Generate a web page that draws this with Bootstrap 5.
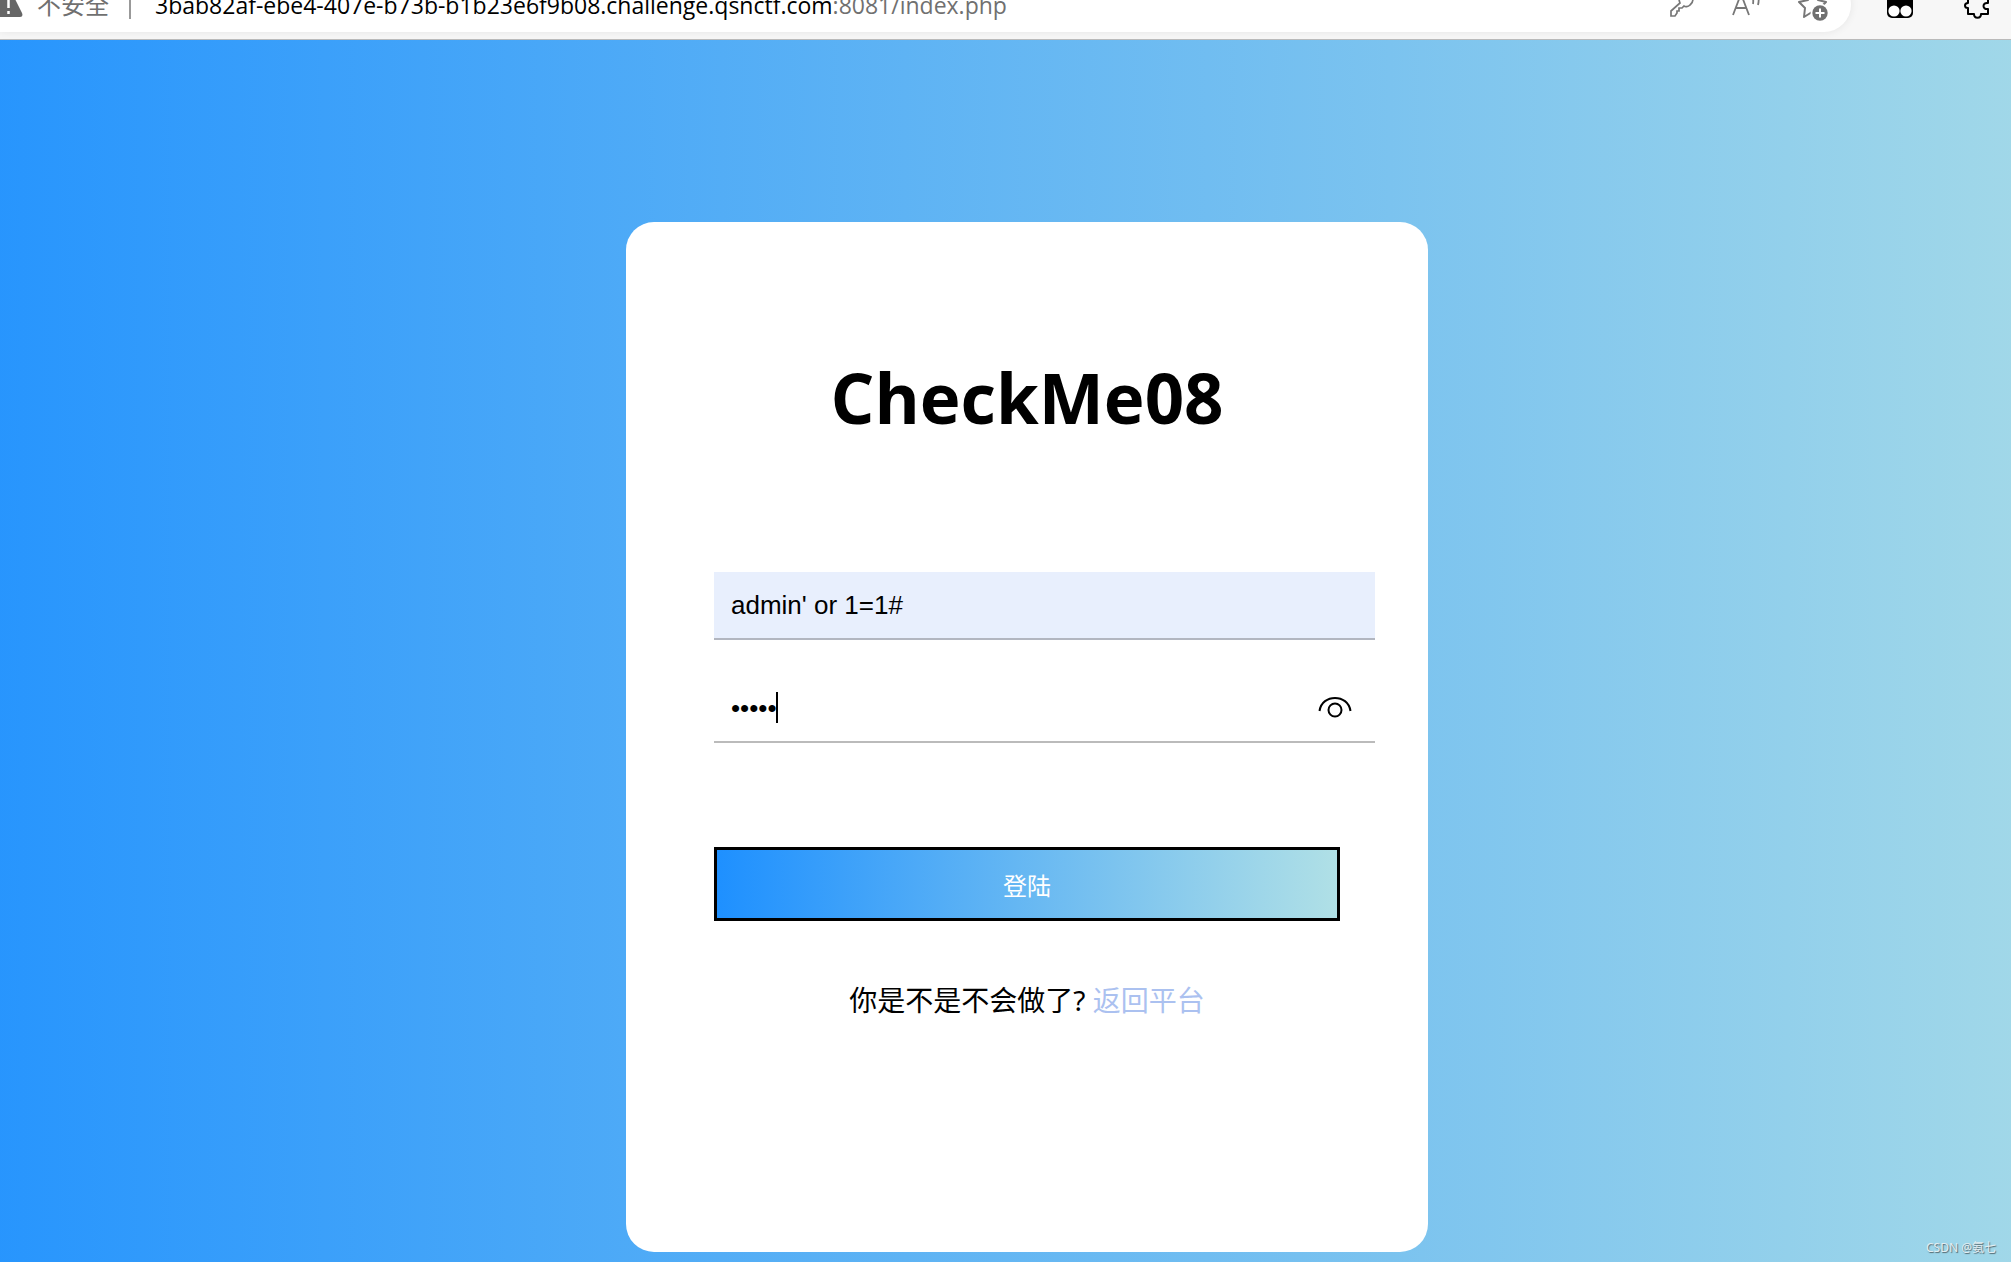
<!DOCTYPE html>
<html lang="zh-CN">
<head>
<meta charset="utf-8">
<meta name="viewport" content="width=device-width, initial-scale=1">
<title>CheckMe08</title>
<link href="https://cdn.jsdelivr.net/npm/bootstrap@5.3.0/dist/css/bootstrap.min.css" rel="stylesheet">
<style>
  body { font-family: "Noto Sans", "Noto Sans CJK SC", sans-serif; color: #000; background: #fff; }
  .toolbar { height: 40px; background: #f7f7f7; border-bottom: 1px solid #bababa; }
  .address { height: 54px; margin-bottom: 7px; padding-right: 20px; border-radius: 0 28px 28px 0; background: #fff; box-shadow: 0 0 8px rgba(0,0,0,.08); font-size: 24px; color: #707070; }
  .address svg, .extensions svg { display: block; flex: none; }
  .warning-label { margin-left: 14px; }
  .divider { width: 2px; height: 28px; background: #999; margin: 0 24px 0 20px; }
  .host { color: #000; }
  .url-text { font-family: "Open Sans", "Noto Sans", sans-serif; font-size: 23px; }
  .tools { gap: 36px; }
  .extensions { height: 54px; margin-bottom: 7px; gap: 50px; padding: 0 20px 0 36px; }
  .stage { min-height: calc(100vh - 40px); padding: 182px 0 11px 43px; background: linear-gradient(to right, #1e90ff -8%, #b0e0e6 113%); }
  .login-box { width: 802px; max-width: 100%; padding: 126px 88px 231px; border-radius: 28px; background: #fff; }
  .login-title { font-family: "Open Sans", "Noto Sans", sans-serif; font-size: 69px; line-height: 98px; font-weight: 700; margin-bottom: 126px; }
  .fields { margin-right: -35px; gap: 35px; }
  .line-input.form-control { height: 68px; padding: 0 17px; border: 0; border-bottom: 2px solid #bbb; border-radius: 0; background: transparent; color: #000; box-shadow: none; font-family: "Liberation Sans", Arial, sans-serif; font-size: 26px; caret-color: transparent; }
  .line-input.filled { background: #e8effd; border-color: #b2b6c0; }
  .caret { left: 62px; top: 17px; width: 2px; height: 31px; background: #000; }
  .reveal { right: 22px; top: 16px; color: #000; }
  .reveal svg { display: block; }
  .login-btn.btn { height: 74px; margin-top: 104px; border: 3px solid #000; border-radius: 0; color: #fff; font-size: 24px; padding: 3px 0 0; background: linear-gradient(to right, #1e90ff, #b0e0e6) padding-box; }
  .hint { font-size: 28px; line-height: 42px; margin: 58px 0 0; }
  .hint a { color: #abc1f0; }
  .watermark { right: 15px; bottom: 6px; font-size: 12px; line-height: 18px; color: #e2eef2; text-shadow: 1px 1px 1px #52656c; }
</style>
</head>
<body>
<header class="toolbar d-flex align-items-end overflow-hidden">
  <div class="address d-flex align-items-center flex-grow-1">
    <svg width="23" height="26" viewBox="0 0 23 26" fill="#666"><path d="M9 0 Q11 0 12.500 2L22 21Q23.500 25 20 25H-4V0Z"/><path d="M8.500 7V16M8.500 19V22" stroke="#fff" stroke-width="2.500"/></svg>
    <span class="warning-label">不安全</span>
    <span class="divider"></span>
    <span class="url-text text-nowrap"><span class="host">3bab82af-ebe4-407e-b73b-b1b23e6f9b08.challenge.qsnctf.com</span>:8081/index.php</span>
    <div class="tools d-flex align-items-center ms-auto">
      <svg width="26" height="28" viewBox="0 0 26 28" fill="none" stroke="#777" stroke-width="1.700"><path d="M2 20 11 12C8 5 13 1 18 2C24 3 26 10 21 14C19 16 16 16 15 15L13 17H10V20H8V22L6 25H2Z"/></svg>
      <svg width="30" height="28" viewBox="0 0 30 28" fill="none" stroke="#777" stroke-width="1.800"><path d="M2 24 10 3 18 24M5 17H15M20 3Q23 7 22 13M25 0Q29 7 27 14"/></svg>
      <svg width="34" height="32" viewBox="0 0 34 32" fill="none" stroke="#777" stroke-width="2" stroke-linejoin="round"><path d="M15 23 7 28 8 19 2 13 11 11 16 2 21 11 29 13 24 18"/><circle cx="23" cy="24" r="9.500" fill="#fff" stroke="none"/><circle cx="23" cy="24" r="7.700" fill="#707070" stroke="none"/><path d="M18.500 24H27.500M23 19.500V28.500" stroke="#fff"/></svg>
    </div>
  </div>
  <div class="extensions d-flex align-items-center">
    <svg width="26" height="26" viewBox="0 0 26 26"><rect width="26" height="26" rx="5"/><circle cx="7" cy="19" r="5.600" fill="#fff"/><circle cx="19" cy="19" r="5.600" fill="#fff"/></svg>
    <svg width="28" height="28" viewBox="0 0 28 28" fill="none" stroke="#000" stroke-width="2" stroke-linejoin="round"><path d="M5 6H10C9 0 18 0 17 6H25V12C19 11 19 19 25 18V23H18C18 28 11 28 11 23H5V17C1 17 1 12 5 12Z"/></svg>
  </div>
</header>
<main class="stage position-relative d-flex justify-content-center align-items-start">
  <form class="login-box" onsubmit="return false">
    <h1 class="login-title text-center">CheckMe08</h1>
    <div class="fields d-flex flex-column">
      <input class="form-control line-input filled" type="text" aria-label="用户名" value="admin' or 1=1#">
      <div class="position-relative">
        <input class="form-control line-input" type="password" aria-label="密码" value="admin">
        <span class="caret position-absolute"></span>
        <button class="reveal btn p-0 border-0 position-absolute" type="button" aria-label="显示密码">
          <svg width="36" height="36" viewBox="0 0 36 36" fill="none" stroke="#000" stroke-width="2"><path d="M2.500 20C5 2.500 31 2.500 33.500 20"/><circle cx="18" cy="19" r="6.500"/></svg>
        </button>
      </div>
    </div>
    <button class="btn login-btn w-100" type="submit">登陆</button>
    <p class="hint text-center">你是不是不会做了? <a class="text-decoration-none" href="#">返回平台</a></p>
  </form>
  <span class="watermark position-absolute">CSDN @氨七</span>
</main>
<script src="https://cdn.jsdelivr.net/npm/bootstrap@5.3.0/dist/js/bootstrap.bundle.min.js"></script>
</body>
</html>
